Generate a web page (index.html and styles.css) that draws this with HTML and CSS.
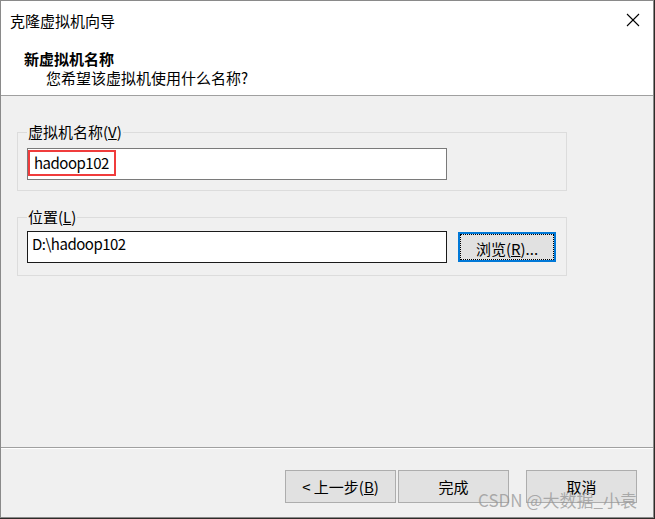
FILE: index.html
```html
<!DOCTYPE html>
<html lang="zh-CN">
<head>
    <meta charset="UTF-8">
    <title>克隆虚拟机向导</title>
    <link rel="stylesheet" href="styles.css">
</head>
<body>
    <div class="fenetre">
        <div class="titre-barre">
            <span class="titre">克隆虚拟机向导</span>
            <svg class="fermer" width="14" height="14" viewBox="0 0 14 14">
                <line x1="1" y1="1" x2="13" y2="13" stroke="#000" stroke-width="1.1"/>
                <line x1="13" y1="1" x2="1" y2="13" stroke="#000" stroke-width="1.1"/>
            </svg>
        </div>
        <div class="entete">
            <div class="entete-titre">新虚拟机名称</div>
            <div class="entete-sous">您希望该虚拟机使用什么名称?</div>
        </div>
        <div class="contenu">
            <fieldset class="groupe">
                <legend>虚拟机名称(<u>V</u>)</legend>
                <div class="ligne">
                    <div class="champ">
                        <span class="marque">hadoop102</span>
                    </div>
                </div>
            </fieldset>
            <fieldset class="groupe groupe-bas">
                <legend>位置(<u>L</u>)</legend>
                <div class="ligne">
                    <div class="champ champ-actif">D:\hadoop102</div>
                    <button class="btn btn-parcourir">浏览(<u>R</u>)...</button>
                </div>
            </fieldset>
        </div>
        <div class="pied">
            <button class="btn btn-pied">&lt; 上一步(<u>B</u>)</button>
            <button class="btn btn-pied">完成</button>
            <button class="btn btn-pied btn-annuler">取消</button>
            <span class="filigrane">CSDN @大数据_小袁</span>
        </div>
    </div>
</body>
</html>
```

FILE: styles.css
```css
body {
    margin: 0;
    background: #2e2b28;
    font-family: "Noto Sans CJK SC", "Noto Sans", sans-serif;
    font-size: 15px;
    color: #000;
}

.fenetre {
    width: 654px;
    height: 518px;
    box-sizing: border-box;
    border: 1px solid #8a8a8a;
    background: #f0f0f0;
    display: flex;
    flex-direction: column;
    position: relative;
}

.titre-barre {
    height: 39px;
    background: #fff;
    display: flex;
    align-items: center;
    justify-content: space-between;
    padding: 0 13px 0 9px;
}

.titre {
    line-height: 20px;
}

.fermer {
    margin-top: -2px;
}

.entete {
    background: #fff;
    padding: 9px 0 8px 23px;
    border-bottom: 1px solid #a0a0a0;
    line-height: 19px;
}

.entete-titre {
    font-weight: bold;
}

.entete-sous {
    padding-left: 22px;
}

.contenu {
    flex: 1;
    padding: 27px 0 0 16px;
}

.groupe {
    width: 550px;
    box-sizing: border-box;
    margin: 0;
    border: 1px solid #dcdcdc;
    padding: 7px 9px 10px 9px;
}

.groupe legend {
    padding: 0 1px;
    margin-left: 0;
    line-height: 18px;
}

.groupe-bas {
    margin-top: 17px;
    padding-top: 5px;
    padding-bottom: 12px;
}

.ligne {
    display: flex;
    align-items: center;
    gap: 11px;
}

.champ {
    width: 420px;
    height: 32px;
    box-sizing: border-box;
    border: 1px solid #7a7a7a;
    background: #fff;
    padding: 1px 0 0 4px;
    line-height: 22px;
    letter-spacing: -0.5px;
}

.champ-actif {
    border-color: #1a1a1a;
}

.marque {
    display: inline-block;
    margin-left: -4px;
    padding: 1px 5px 1px 4px;
    border: 2px solid #f03c3c;
    line-height: 20px;
}

.btn {
    font-family: inherit;
    font-size: 15px;
    color: #000;
    background: #e1e1e1;
    border: 1px solid #adadad;
    margin: 0;
    padding: 0;
}

.btn-parcourir {
    width: 98px;
    height: 30px;
    border: 2px solid #0078d7;
    outline: 1px dotted #000;
    outline-offset: -3px;
    padding-top: 2px;
}

.pied {
    height: 70px;
    border-top: 1px solid #a0a0a0;
    box-shadow: inset 0 1px 0 #fff;
    display: flex;
    align-items: flex-start;
    padding: 22px 0 0 284px;
    box-sizing: border-box;
}

.btn-pied {
    width: 111px;
    height: 33px;
    margin-right: 2px;
}

.btn-annuler {
    margin-left: 15px;
}

.filigrane {
    position: absolute;
    left: 477px;
    top: 486px;
    font-size: 17px;
    color: rgba(150, 150, 150, 0.75);
    white-space: nowrap;
}
```
